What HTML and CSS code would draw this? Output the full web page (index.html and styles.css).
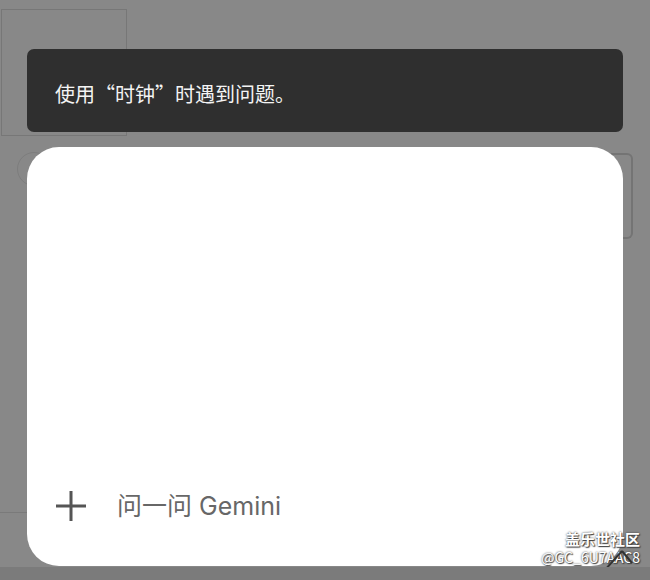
FILE: index.html
```html
<!DOCTYPE html>
<html lang="zh-CN">
<head>
  <meta charset="UTF-8">
  <meta name="viewport" content="width=device-width, initial-scale=1.0">
  <title>时钟</title>
  <link rel="stylesheet" href="styles.css">
</head>
<body>
  <div class="screen">
    <!-- app behind the scrim -->
    <div class="ghost ghost-box"></div>
    <div class="ghost ghost-circle"></div>
    <div class="ghost ghost-ruler"></div>
    <div class="ghost ghost-line"></div>

    <div class="stack">
      <div class="toast">使用“时钟”时遇到问题。</div>

      <div class="sheet">
        <div class="prompt">
          <svg class="plus" width="32" height="32" viewBox="0 0 32 32">
            <path d="M16 1v30M1 16h30" stroke="#555" stroke-width="3" fill="none"/>
          </svg>
          <span class="placeholder">问一问 Gemini</span>
        </div>
      </div>
    </div>

    <div class="watermark">
      <div class="wm-title">盖乐世社区</div>
      <div class="wm-user">@GC_6U7AAC8</div>
      <svg class="wm-logo" width="34" height="26" viewBox="0 0 34 26">
        <path d="M4 24L22 4M22 4L32 16" stroke="#333" stroke-width="2" fill="none"/>
      </svg>
    </div>
  </div>
  <div class="navbar"></div>
</body>
</html>
```

FILE: styles.css
```css
body {
  margin: 0;
  background-color: #888;
  font-family: "Noto Sans CJK SC", "Noto Sans", sans-serif;
}
.screen {
  position: relative;
  height: 567px;
  overflow: hidden;
}
.ghost {
  position: absolute;
}
.ghost-box {
  left: 1px;
  top: 9px;
  width: 124px;
  height: 125px;
  border: 1px solid #777;
}
.ghost-circle {
  left: 17px;
  top: 152px;
  width: 32px;
  height: 32px;
  border: 1px solid #7d7d7d;
  border-radius: 50%;
}
.ghost-ruler {
  left: 611px;
  top: 153px;
  width: 20px;
  height: 82px;
  border: 2px solid #747474;
  border-left: none;
  border-radius: 0 6px 6px 0;
}
.ghost-line {
  left: 0;
  top: 512px;
  width: 30px;
  border-top: 1px solid #7a7a7a;
}
.stack {
  position: relative;
  display: flex;
  flex-direction: column;
  gap: 15px;
  padding: 49px 27px 0;
}
.toast {
  height: 83px;
  box-sizing: border-box;
  display: flex;
  align-items: center;
  padding: 5px 28px 0;
  background-color: #2f2f2f;
  border-radius: 7px;
  color: #f4f4f4;
  font-size: 20px;
}
.sheet {
  height: 419px;
  background-color: #fff;
  border-radius: 32px;
  display: flex;
  flex-direction: column;
  justify-content: flex-end;
}
.prompt {
  display: flex;
  align-items: center;
  gap: 30px;
  padding: 0 0 44px 28px;
}
.plus {
  display: block;
}
.placeholder {
  color: #676767;
  font-family: Inter, "Noto Sans CJK SC", sans-serif;
  font-size: 25px;
  line-height: 32px;
}
.watermark {
  position: absolute;
  right: 10px;
  bottom: 0;
  text-align: right;
  color: #fff;
  font-size: 14px;
  line-height: 19px;
  text-shadow: 0 0 2px #333, 1px 1px 1px #444;
}
.wm-title {
  font-size: 15px;
  font-weight: bold;
}
.wm-logo {
  position: absolute;
  right: 6px;
  bottom: -6px;
}
.navbar {
  height: 13px;
  background-color: #7b7b7b;
}
```
